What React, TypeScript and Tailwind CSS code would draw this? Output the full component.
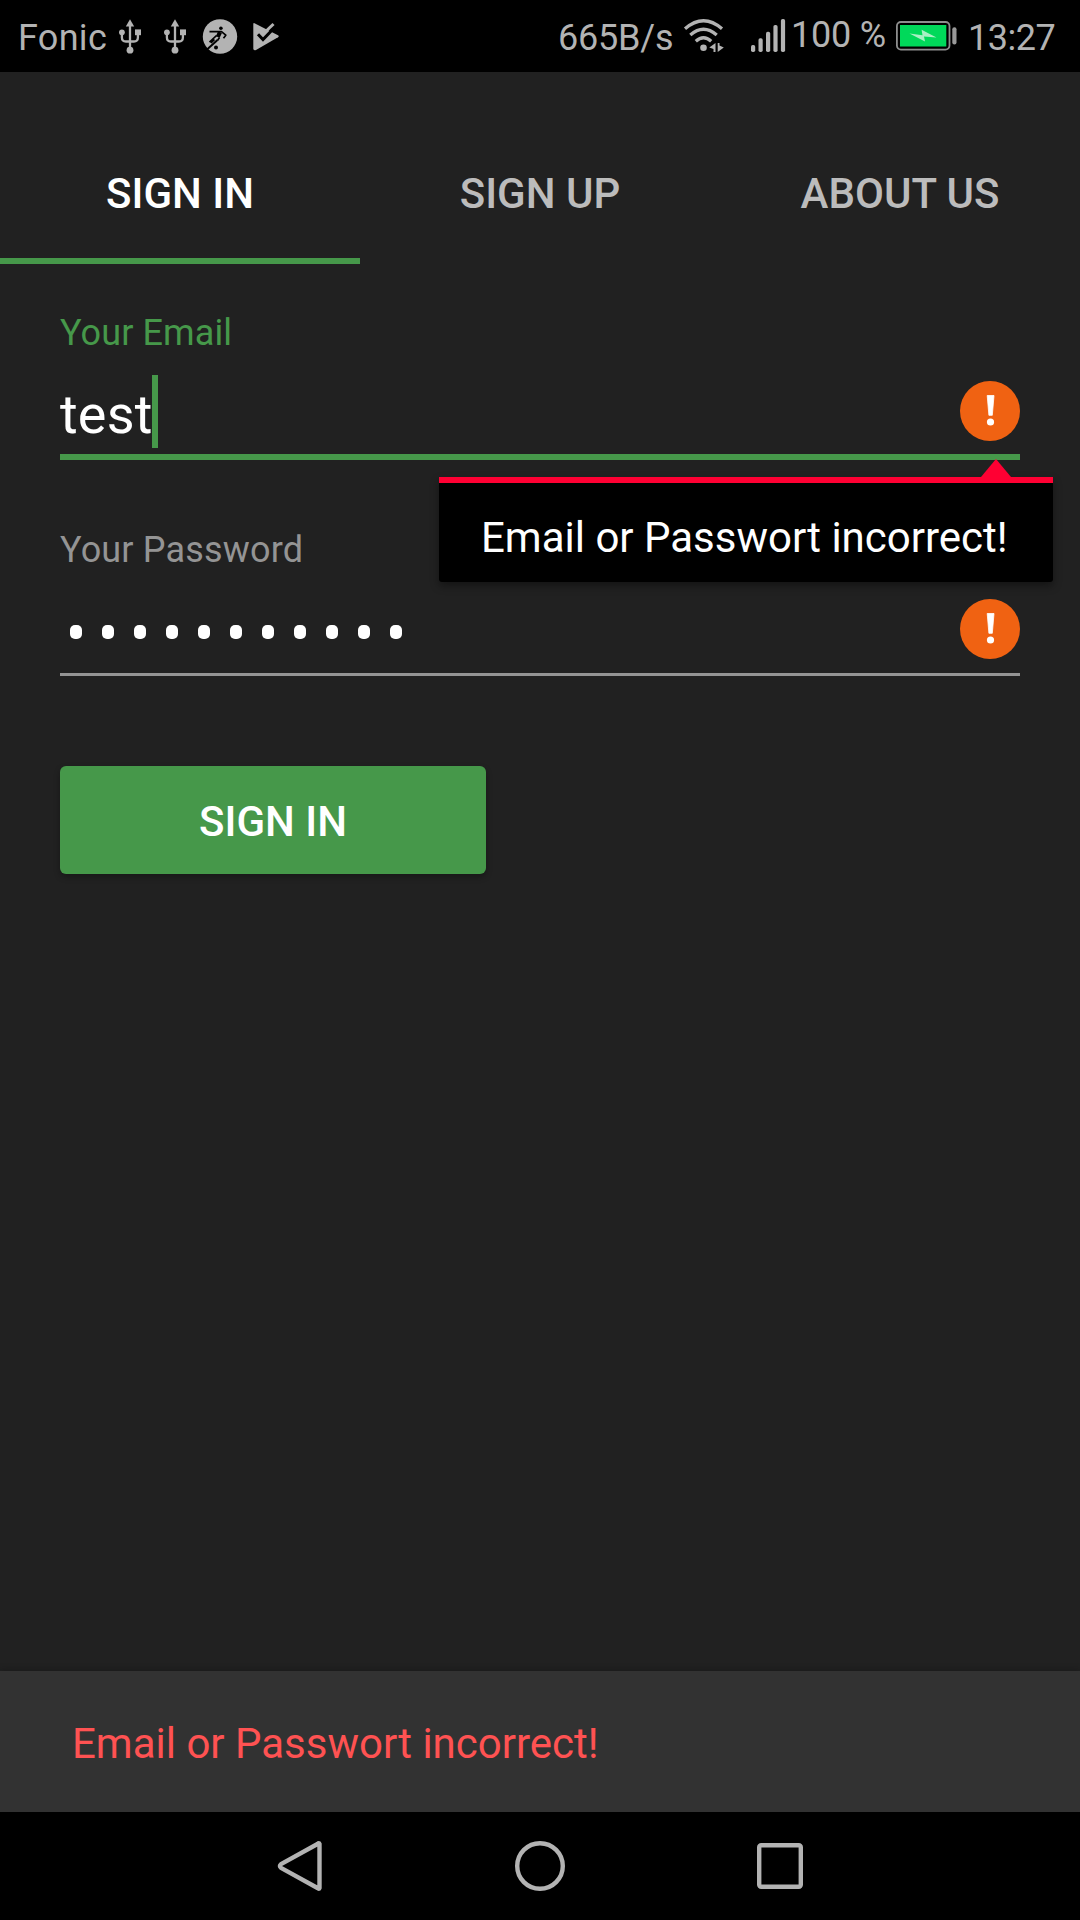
import React from "react";

const GRAY = "#b3b3b3";

function UsbIcon() {
  return (
    <svg width="24" height="36" viewBox="0 0 24 36" fill={GRAY} className="shrink-0">
      <path d="M12 1.2 16.2 8.4H7.8Z" />
      <circle cx="12" cy="32.2" r="3.4" />
      <circle cx="3.9" cy="14.3" r="2.9" />
      <rect x="17" y="11.4" width="6" height="5.8" />
      <path d="M12 7V31M3.9 15v4.500q0 4 4 4h8q4 0 4-4V15" fill="none" stroke={GRAY} strokeWidth="2.3" />
    </svg>
  );
}

function PlayerIcon() {
  return (
    <svg width="36" height="36" viewBox="0 0 36 36" className="shrink-0">
      <circle cx="18" cy="18.5" r="17.2" fill={GRAY} />
      <g fill="none" stroke="#000" strokeWidth="1.7" strokeLinejoin="round">
        <circle cx="18.9" cy="10.2" r="1.8" fill="#000" stroke="none" />
        <path d="M7.5 13.600H19.500L23.800 17.200 21.500 20.200" />
        <path d="M18 14.200 15.800 19" strokeWidth="4.200" />
        <path d="M14.500 17.500 7.500 24.200M12.500 21.500 9 25M17.500 19.500 15.500 22.500" />
        <path d="M15.500 22 5 31.500" strokeWidth="2" />
        <circle cx="14" cy="29.600" r="2" fill="#000" stroke="none" />
      </g>
    </svg>
  );
}

function PlayCheckIcon() {
  return (
    <svg width="28" height="36" viewBox="0 0 28 36" className="shrink-0">
      <path d="M2.500 5.200 26 17.200q1.500 1 0 2L4 32Q1.300 33 1.300 30.500V6Q1.300 4.700 2.500 5.200Z" fill={GRAY} />
      <path d="M6 16.200 11 21.500 23.500 8.500" fill="none" stroke="#000" strokeWidth="3" />
      <path d="M11 16 21.500 6" fill="none" stroke={GRAY} strokeWidth="3" />
    </svg>
  );
}

function WifiIcon() {
  return (
    <svg width="42" height="36" viewBox="0 0 42 36" className="shrink-0">
      <g fill="none" stroke={GRAY} strokeWidth="3.300">
        <path d="M2 10.800Q20.500-5.200 39 10.800" />
        <path d="M7.300 17Q20.500 5.500 33.700 17" />
        <path d="M12.800 23.200Q20.500 16.200 28.200 23.200" />
      </g>
      <circle cx="20.500" cy="29.700" r="3.300" fill={GRAY} />
      <path d="M32.500 25v9h-2v-3L26.300 29.600ZM34.700 25h1.800v2.600L40.800 29.400 34.700 34Z" fill={GRAY} />
    </svg>
  );
}

function SignalIcon() {
  return (
    <svg width="36" height="36" viewBox="0 0 36 36" fill={GRAY} className="shrink-0">
      <rect x="1" y="27" width="4.200" height="7" rx="1.700" />
      <rect x="8.500" y="20.200" width="4.200" height="13.800" rx="1.700" />
      <rect x="16" y="13.700" width="4.200" height="20.300" rx="1.700" />
      <rect x="23.400" y="7" width="4.200" height="27" rx="1.700" />
      <rect x="30.900" y="1" width="4.200" height="33" rx="1.700" />
    </svg>
  );
}

function BatteryIcon() {
  return (
    <svg width="62" height="30" viewBox="0 0 62 30" className="shrink-0">
      <rect x="0.900" y="1" width="52.600" height="27.600" rx="4" fill="none" stroke="#8e8e8e" strokeWidth="1.800" />
      <rect x="4" y="4" width="46.300" height="21.500" fill="#00d95a" />
      <path d="M13.500 12.600 26.500 14.300 25.600 8.700 40.500 16.600 28 15.500 29 20.600Z" fill="#a8f0c4" />
      <rect x="56.300" y="6.300" width="4.200" height="17.200" rx="2" fill="#999" />
    </svg>
  );
}

function ErrorIcon() {
  return (
    <svg width="60" height="60" viewBox="0 0 60 60" className="shrink-0">
      <circle cx="30" cy="30" r="30" fill="#f06212" />
      <path d="M27.200 14.500h6.800L32.300 34.300h-3.400Z" fill="#fff" stroke="#fff" strokeWidth="0.800" strokeLinejoin="round" />
      <circle cx="30.500" cy="41" r="3.600" fill="#fff" />
    </svg>
  );
}

function StatusBar() {
  return (
    <header className="flex h-[72px] items-start bg-black pl-[18px] text-[36px] leading-[42px] text-[#b3b3b3]">
      <span className="mt-[17px] w-[99.500px] shrink-0 tracking-[0.3px]">Fonic</span>
      <div className="mt-[18px] flex">
        <UsbIcon />
        <div className="ml-[21px]"><UsbIcon /></div>
        <div className="ml-[15px]"><PlayerIcon /></div>
        <div className="ml-[14px]"><PlayCheckIcon /></div>
      </div>
      <span className="mt-[17px] ml-[278.500px] w-[125px] shrink-0 tracking-[-0.2px]">665B/s</span>
      <div className="mt-[18px] flex">
        <WifiIcon />
        <div className="ml-[25px]"><SignalIcon /></div>
      </div>
      <span className="mt-[14px] ml-[5px] w-[105px] shrink-0 tracking-[-0.2px] whitespace-nowrap">100 %</span>
      <div className="mt-[21px]"><BatteryIcon /></div>
      <span className="mt-[17px] ml-[10px] tracking-[-0.5px] whitespace-nowrap">13:27</span>
    </header>
  );
}

function Tab({ label, active }: { label: string; active?: boolean }) {
  return (
    <button
      className={
        active
          ? "h-[144px] flex-1 border-b-[6px] border-[#46984a] pt-[10px] text-center text-white"
          : "h-[144px] flex-1 border-b-[6px] border-transparent pt-[10px] text-center text-[#bcbcbc]"
      }
    >
      {label}
    </button>
  );
}

export default function App() {
  return (
    <div className="flex h-[1920px] w-[1080px] flex-col overflow-hidden bg-[#212121] font-['Roboto',sans-serif]">
      <StatusBar />
      <nav className="flex pt-[48px] text-[42px] leading-[50px] font-medium">
        <Tab label="SIGN IN" active />
        <Tab label="SIGN UP" />
        <Tab label="ABOUT US" />
      </nav>

      <main className="flex flex-1 flex-col px-[60px] pt-[48px]">
        <label className="h-[42px] text-[36px] leading-[42px] tracking-[0.1px] text-[#46984a]">Your Email</label>
        <div className="relative mt-[21px] flex h-[85px] items-start justify-between border-b-[6px] border-[#46984a]">
          <div className="flex">
            <span className="w-[92px] pt-[8px] text-[54px] leading-[64px] tracking-[0.2px] text-white">test</span>
            <span className="h-[73px] w-[6px] bg-[#46984a]" />
          </div>
          <div className="mt-[6px]"><ErrorIcon /></div>
          <div className="absolute top-[84px] right-[-33px] w-[614px]">
            <svg width="30" height="18" viewBox="0 0 30 18" className="ml-[542px] block">
              <path d="M15 0 30 18H0Z" fill="#ff0033" />
            </svg>
            <div className="h-[105px] rounded-b-[3px] border-t-[6px] border-[#ff0033] bg-black pt-[30px] pl-[42px] text-[42px] leading-[50px] whitespace-nowrap text-white shadow-[0_4px_8px_rgba(0,0,0,0.4)]">
              Email or Passwort incorrect!
            </div>
          </div>
        </div>

        <label className="mt-[69px] h-[42px] text-[36px] leading-[42px] tracking-[0.17px] text-[#949494]">Your Password</label>
        <div className="mt-[28px] flex h-[77px] items-start justify-between border-b-[3px] border-[#949494]">
          <div className="mt-[26px] flex gap-[20px] pl-[10px]">
            {Array.from({ length: 11 }, (_, i) => (
              <span key={i} className="h-[14px] w-[12px] rounded-[5px] bg-white" />
            ))}
          </div>
          <ErrorIcon />
        </div>

        <button className="mt-[90px] h-[108px] w-[426px] rounded-[6px] bg-[#46984a] pt-[4px] text-[42px] leading-[50px] font-medium text-white shadow-[0_3px_6px_rgba(0,0,0,0.3)]">
          SIGN IN
        </button>
      </main>

      <div className="h-[141px] bg-[#323232] pt-[48px] pl-[72px] text-[42px] leading-[50px] text-[#ff5252] shadow-[0_-2px_6px_rgba(0,0,0,0.2)]">
        Email or Passwort incorrect!
      </div>

      <footer className="flex h-[108px] items-center justify-center gap-[189px] bg-black">
        <svg width="50" height="52" viewBox="0 0 50 52" fill="none" stroke={GRAY} strokeWidth="4.400" strokeLinejoin="round">
          <path d="M44.500 4V48Q44 49.500 42.500 48L6 27.800Q3.800 26 6 24.200L42.500 4Q44 2.500 44.500 4Z" />
        </svg>
        <svg width="52" height="52" viewBox="0 0 52 52" fill="none" stroke={GRAY} strokeWidth="4.400">
          <circle cx="26" cy="26" r="22.800" />
        </svg>
        <svg width="50" height="52" viewBox="0 0 50 52" fill="none" stroke={GRAY} strokeWidth="4.400">
          <rect x="4.200" y="5.200" width="41.600" height="41.600" rx="2" />
        </svg>
      </footer>
    </div>
  );
}
